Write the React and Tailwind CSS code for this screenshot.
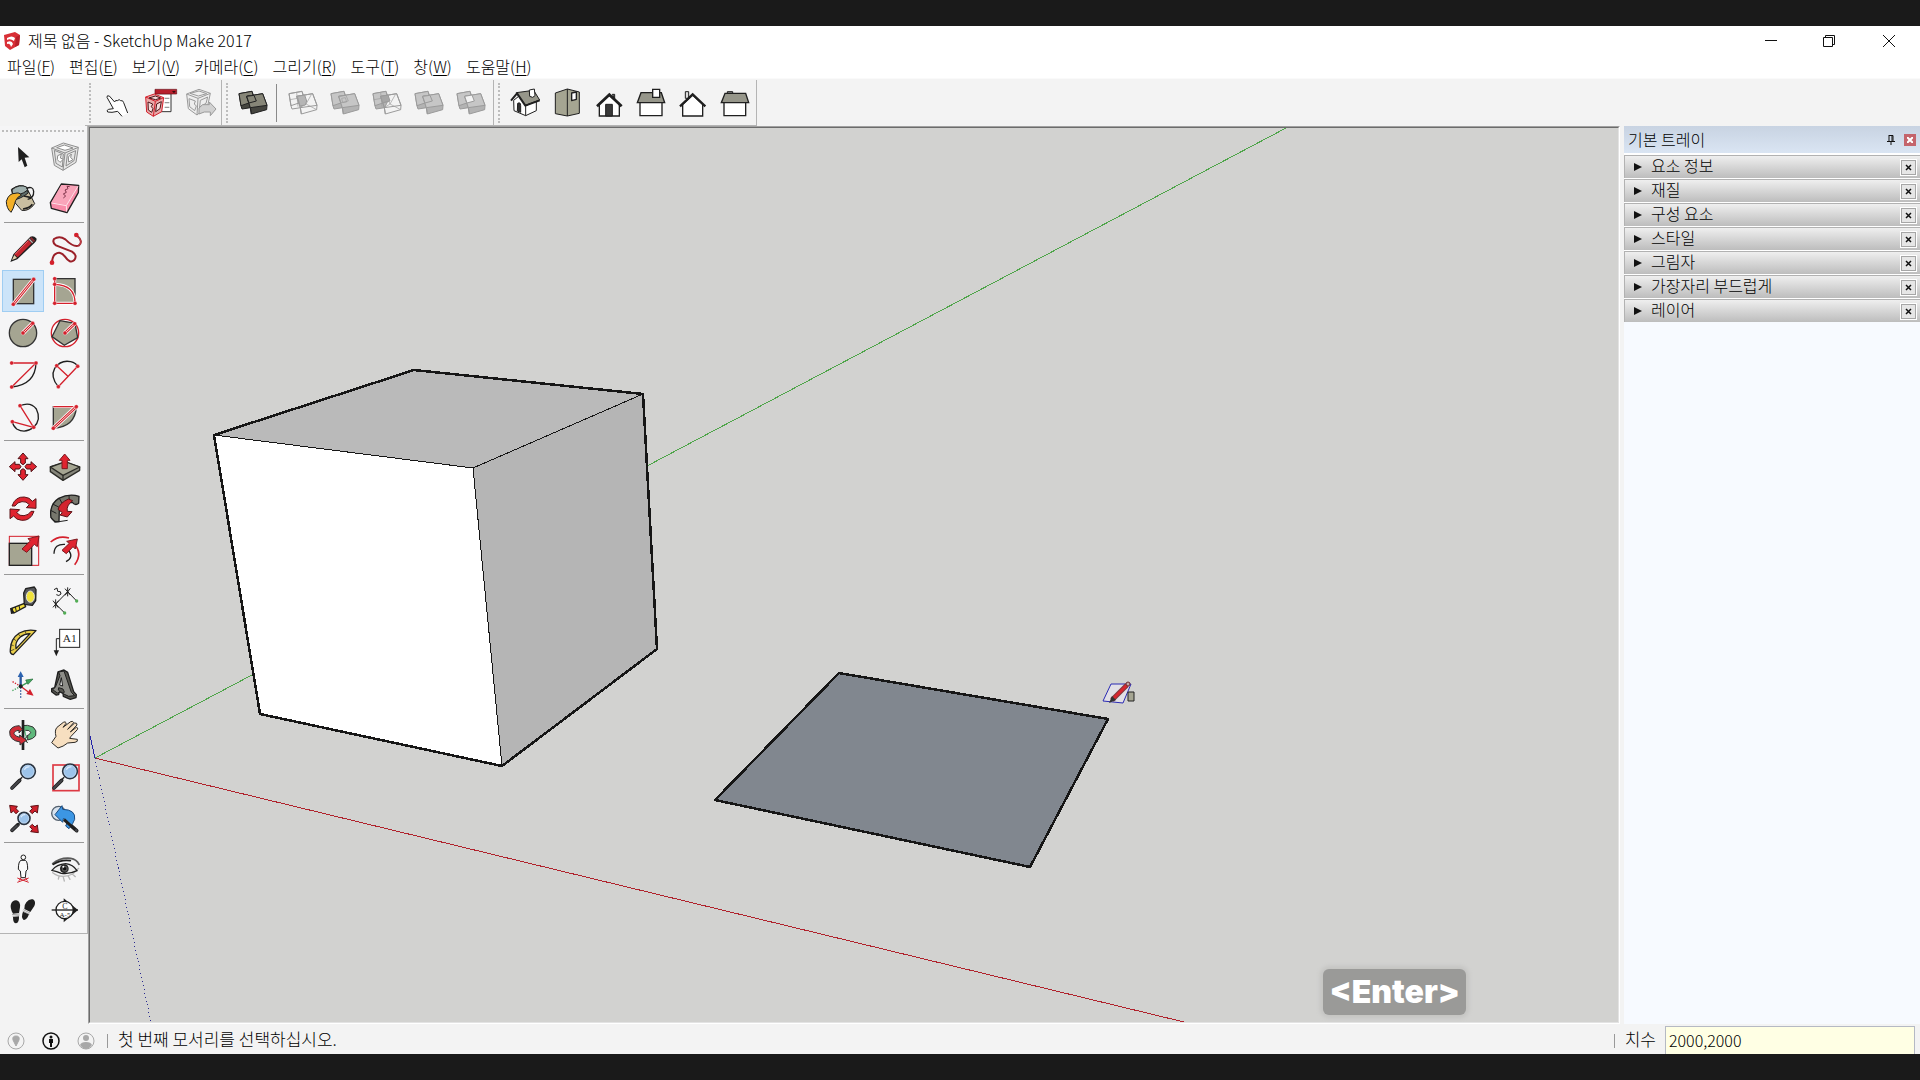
const RED = '#d4202c';
const INK = '#1f1f1f';
const CLAY = '#a5a592';

const MENUS = [
  ['파일', 'F'],
  ['편집', 'E'],
  ['보기', 'V'],
  ['카메라', 'C'],
  ['그리기', 'R'],
  ['도구', 'T'],
  ['창', 'W'],
  ['도움말', 'H'],
];

const TRAY_PANELS = ['요소 정보', '재질', '구성 요소', '스타일', '그림자', '가장자리 부드럽게', '레이어'];

// red guide line with white halo and a handle at each end
const Guide = ({ from, to }) => (
  <g>
    <path d={`M${from}L${to}`} stroke="#fff" strokeWidth="13" />
    <path d={`M${from}L${to}`} stroke={RED} strokeWidth="8" />
    <path d={`M${from}L${to}`} stroke="#f7dcd8" strokeWidth="3" />
    <Dots at={[from, to]} />
  </g>
);

const Dots = ({ at }) => at.map(p => {
  const [x, y] = p.split(' ');
  return <circle key={p} cx={x} cy={y} r="6" fill={RED} stroke="#fff" strokeWidth="1" />;
});

const Glass = ({ x, y, r = 22 }) => (
  <g>
    <path d={`M${x - r * 0.8} ${y + r * 0.8}L${x - r * 1.15} ${y + r * 1.15}`} stroke={INK} strokeWidth="4" />
    <circle cx={x} cy={y} r={r} fill="#9cc3ea" stroke="#2b3440" strokeWidth="5" />
    <circle cx={x} cy={y} r={r - 4} fill="none" stroke="#c4d9ef" strokeWidth="2" />
    <path d={`M${x - r * 0.5} ${y - r * 0.2}Q${x - r * 0.3} ${y - r * 0.7} ${x + r * 0.2} ${y - r * 0.6}`} fill="none" stroke="#dceafa" strokeWidth="4" />
  </g>
);

const Handle = ({ d }) => (
  <g strokeLinecap="round">
    <path d={d} stroke={INK} strokeWidth="11" />
    <path d={d} stroke="#47474c" strokeWidth="6" />
  </g>
);

const TOOLS = [
  [
    {
      name: '선택', box: '6 33 126 126',
      art: <path d="M54 66L88 97L74 98L82 122L74 127L65 103L56 111Z" fill={INK} />,
    },
    {
      name: '구성 요소 만들기', box: '132 33 126 126',
      art: (
        <g fill="#e6e6e6" stroke="#8d8d8d" strokeWidth="3" strokeLinejoin="round">
          <path d="M155 69L190 54L235 67L228 112L189 136L163 121Z" />
          <path d="M155 69L195 84L235 67M195 84L189 136M163 76L190 87L187 126L168 115ZM202 88L227 77L222 107L198 123Z" />
          <path d="M170 68L193 60L219 69L195 76ZM173 92L184 87L181 99L190 103L180 112L172 104ZM205 96L214 87L212 98L219 104L206 111Z" fill="#fff" />
        </g>
      ),
    },
    {
      name: '페인트 통', box: '6 159 126 126',
      art: (
        <g stroke={INK} strokeWidth="3" strokeLinejoin="round">
          <path d="M34 193Q62 173 80 188L104 236Q87 260 65 256L44 232Z" fill="#c9bea0" />
          <path d="M36 194Q58 176 80 186Q88 200 69 210Q50 220 38 209Z" fill="#9fb0ae" />
          <path d="M38 205Q58 215 82 196L85 204Q60 222 44 224Z" fill="#5e6c69" />
          <path d="M79 190Q99 182 101 199Q102 220 83 223" fill="none" strokeWidth="4" />
          <path d="M19 229Q26 205 45 205Q59 201 64 211Q48 217 44 236Q41 250 33 262Q19 250 19 229Z" fill="#f3b028" />
          <path d="M72 213L94 218M69 252Q88 250 97 238" fill="none" strokeWidth="5" />
        </g>
      ),
    },
    {
      name: '지우개', box: '132 159 126 126',
      art: (
        <g stroke={INK} strokeWidth="4" strokeLinejoin="round">
          <path d="M184 177L236 181L235 203L201 263L154 250L151 233Z" fill="#f88da9" />
          <path d="M184 180L233 184L200 240L155 232Z" fill="#f9a5ba" stroke="none" />
          <path d="M155 234L199 242L234 184M199 242L200 260" fill="none" stroke="#fde4e9" strokeWidth="3" />
          <path d="M190 219L197 213L190 207L199 202L195 195L204 191L201 184L209 185" fill="none" stroke="#7d3248" strokeWidth="3" />
        </g>
      ),
    },
  ],
  [
    {
      name: '선', box: '6 309 126 126',
      art: (
        <g strokeLinejoin="round">
          <path d="M31 411L40 388L91 335Q101 331 109 340Q112 347 104 353L52 403Z" fill={INK} />
          <path d="M36 405L43 390L51 399Z" fill="#e6d3b0" />
          <path d="M43 388L84 345L95 355L53 397Z" fill="#c2242d" />
          <path d="M45 388L85 347" stroke="#e8636a" strokeWidth="3" />
          <path d="M87 342L98 353" stroke="#c7b1b1" strokeWidth="4" />
          <path d="M92 338L103 349" stroke="#8c2a31" strokeWidth="6" />
        </g>
      ),
    },
    {
      name: '자유형', box: '132 309 126 126',
      art: (
        <g fill="none">
          <path d="M229 330Q252 350 236 362Q221 368 196 343Q178 331 162 342Q156 353 168 361L216 380Q234 392 222 406Q210 417 195 395Q181 376 165 388Q157 395 156 413" stroke="#9b2029" strokeWidth="6" />
          <path d="M229 330Q252 350 236 362" stroke="#d95058" strokeWidth="2" />
          <circle cx="229" cy="330" r="7" fill={RED} />
          <circle cx="156" cy="413" r="7" fill={RED} />
        </g>
      ),
    },
    {
      name: '직사각형', box: '6 435 126 126', active: true,
      art: (
        <g>
          <rect x="40" y="463" width="61" height="73" fill={CLAY} stroke="#333" strokeWidth="4" />
          <Guide from="40 538" to="101 463" />
        </g>
      ),
    },
    {
      name: '회전된 직사각형', box: '132 435 126 126',
      art: (
        <g fill="none">
          <path d="M164 461H225V535H164Z" fill={CLAY} stroke="#333" strokeWidth="4" />
          <path d="M164 461V535H225Q226 480 164 478" stroke="#fff" strokeWidth="9" />
          <path d="M164 461V535H225Q226 480 164 478" stroke={RED} strokeWidth="4" />
          <Dots at={['164 461', '164 478', '164 535', '225 535']} />
        </g>
      ),
    },
    {
      name: '원', box: '6 561 126 126',
      art: (
        <g>
          <circle cx="69" cy="624" r="41" fill={CLAY} stroke="#333" strokeWidth="4" />
          <Guide from="69 624" to="98 595" />
        </g>
      ),
    },
    {
      name: '다각형', box: '132 561 126 126',
      art: (
        <g>
          <circle cx="195" cy="624" r="41" fill="#fff" stroke={RED} strokeWidth="4" />
          <path d="M180 587L225 595L233 638L193 661L156 635Z" fill={CLAY} stroke="#333" strokeWidth="4" />
          <Guide from="195 624" to="224 596" />
        </g>
      ),
    },
    {
      name: '호', box: '6 687 126 126',
      art: (
        <g fill="none">
          <path d="M108 714Q106 779 35 786" stroke={INK} strokeWidth="4" />
          <path d="M35 714H108L35 786" stroke={RED} strokeWidth="4" />
          <Dots at={['35 714', '108 714', '35 786']} />
        </g>
      ),
    },
    {
      name: '2점 호', box: '132 687 126 126',
      art: (
        <g fill="none">
          <path d="M175 785Q150 756 164 730Q182 704 212 710Q228 714 233 724" stroke={INK} strokeWidth="4" />
          <path d="M175 785L233 724M170 722L203 753" stroke={RED} strokeWidth="4" />
          <Dots at={['175 785', '233 724', '170 722']} />
        </g>
      ),
    },
    {
      name: '3점 호', box: '6 813 126 126',
      art: (
        <g fill="none">
          <path d="M60 842Q92 829 109 852Q125 884 101 907Q76 927 50 912Q39 903 37 890" stroke={INK} strokeWidth="4" />
          <path d="M60 842L101 907L37 890" stroke={RED} strokeWidth="4" />
          <Dots at={['60 842', '101 907', '37 890']} />
        </g>
      ),
    },
    {
      name: '파이', box: '132 813 126 126',
      art: (
        <g fill="none">
          <path d="M160 845H229Q226 905 160 910Z" fill={CLAY} stroke="#333" strokeWidth="4" />
          <path d="M160 845H229" stroke="#fff" strokeWidth="8" />
          <path d="M160 845H229" stroke={RED} strokeWidth="4" />
          <Guide from="160 910" to="229 845" />
        </g>
      ),
    },
  ],
  [
    {
      name: '이동', box: '6 33 126 126',
      art: (
        <g fill="#e02430" stroke="#4d1216" strokeWidth="3" strokeLinejoin="round">
          {[0, 90, 180, 270].map(a => (
            <path key={a} transform={`rotate(${a} 69 95)`} d="M69 54L84 71H76V84L69 89L62 84V71H54Z" />
          ))}
        </g>
      ),
    },
    {
      name: '밀기/끌기', box: '132 33 126 126',
      art: (
        <g stroke="#2b2b26" strokeWidth="4" strokeLinejoin="round">
          <path d="M151 96L196 82L239 96V106L189 136L151 110Z" fill="#85857a" />
          <path d="M151 96L196 80L239 96L189 121Z" fill={CLAY} />
          <path d="M189 121V136" />
          <path d="M194 57L210 76H202V101H186V76H178Z" fill="#e02430" stroke="#7b1a20" strokeWidth="3" />
        </g>
      ),
    },
    {
      name: '회전', box: '6 159 126 126',
      art: (
        <g fill="#e02430" stroke="#5c1418" strokeWidth="3" strokeLinejoin="round">
          <path d="M36 213Q46 184 73 186Q89 187 97 199L108 191V220L79 218L88 209Q79 198 66 200Q52 201 45 213Z" />
          <path transform="rotate(180 69 221)" d="M36 213Q46 184 73 186Q89 187 97 199L108 191V220L79 218L88 209Q79 198 66 200Q52 201 45 213Z" />
        </g>
      ),
    },
    {
      name: '따라가기', box: '132 159 126 126',
      art: (
        <g stroke={INK} strokeWidth="4" strokeLinejoin="round">
          <path d="M153 248Q147 209 176 190Q208 174 237 184L236 205Q226 213 217 202Q188 203 178 224L177 260L165 261Z" fill="#77776d" />
          <path d="M152 226L169 235M158 207L176 216M178 190L187 206M207 181L208 200" strokeWidth="3" />
          <path d="M153 248Q160 262 177 260L203 256" fill="none" strokeWidth="3" />
          <path d="M174 223Q179 204 205 192L218 197Q198 212 202 229L216 230L202 246L180 240L187 233Q180 228 174 223Z" fill="#d3242f" stroke="#5c1418" strokeWidth="3" />
        </g>
      ),
    },
    {
      name: '배율', box: '6 285 126 126',
      art: (
        <g>
          <rect x="28" y="304" width="88" height="87" fill="none" stroke={RED} strokeWidth="3" />
          <rect x="28" y="325" width="67" height="66" fill={CLAY} stroke="#222" strokeWidth="4" />
          <path d="M117 303L112 335L103 328L80 352L66 342L91 318L84 311Z" fill="#e02430" stroke="#7b1a20" strokeWidth="3" />
        </g>
      ),
    },
    {
      name: '간격띄우기', box: '132 285 126 126',
      art: (
        <g fill="none">
          <path d="M152 321Q175 300 207 309M221 325Q250 355 224 389" stroke={RED} strokeWidth="5" />
          <path d="M162 356Q163 326 195 328M205 345Q223 367 198 380" stroke={INK} strokeWidth="4" />
          <path d="M232 312L226 342L219 335L199 356L186 346L208 325L200 319Z" fill="#e02430" stroke="#7b1a20" strokeWidth="3" />
        </g>
      ),
    },
  ],
  [
    {
      name: '줄자', box: '6 435 126 126',
      art: (
        <g stroke={INK} strokeWidth="4" strokeLinejoin="round">
          <path d="M33 521L73 505L77 515L42 534Z" fill="#f2dd3c" />
          <path d="M34 519L37 536" strokeWidth="8" />
          <path d="M46 516L49 529M57 512L60 525" strokeWidth="3" />
          <path d="M77 461L103 456L108 464L107 497L97 511L73 508L71 474Z" fill="#57585b" />
          <ellipse cx="91" cy="485" rx="12" ry="17" fill="#f1e23a" stroke="#e4e4d8" strokeWidth="3" />
        </g>
      ),
    },
    {
      name: '치수', box: '132 435 126 126',
      art: (
        <g stroke={INK} strokeWidth="3" fill="none">
          <path d="M167 507L203 470M167 507L194 534M203 470L230 498" />
          <path d="M159 497L175 518M176 497L159 517M167 493V520M195 461L211 480M211 460L195 481M203 457V484" />
          <path d="M162 464L171 459L173 469Q184 467 183 477Q177 485 169 479" />
          <circle cx="194" cy="534" r="5" fill="#52ad55" stroke="none" />
          <circle cx="230" cy="498" r="5" fill="#52ad55" stroke="none" />
        </g>
      ),
    },
    {
      name: '각도기', box: '6 561 126 126',
      art: (
        <g stroke={INK} strokeWidth="4" strokeLinejoin="round">
          <path d="M108 587L40 659Q29 657 31 643Q32 611 58 594Q80 582 108 587Z" fill="#e9ce4b" />
          <path d="M90 596L48 641Q44 621 61 606Q72 597 90 596Z" fill="#f6f6f6" />
          <path d="M32 629L41 632M40 611L48 617M55 597L61 604M75 588L78 596M33 647L43 643" strokeWidth="2" />
        </g>
      ),
    },
    {
      name: '문자', box: '132 561 126 126',
      art: (
        <g>
          <path d="M179 611H169V650" fill="none" stroke={INK} strokeWidth="3" />
          <path d="M161 646H177L169 664Z" fill={INK} />
          <rect x="179" y="583" width="60" height="54" fill="#fff" stroke={INK} strokeWidth="3" />
          <text x="209" y="620" textAnchor="middle" fontSize="34" fontFamily="Liberation Serif, serif" fill={INK}>A1</text>
        </g>
      ),
    },
    {
      name: '축', box: '6 687 126 126',
      art: (
        <g fill="none" strokeWidth="4">
          <path d="M62 754V722" stroke="#2b579a" strokeWidth="7" />
          <path d="M62 709L71 726H53Z" fill="#2b62b0" />
          <path d="M62 754L82 743" stroke="#3b9a55" />
          <path d="M99 732L84 748L77 735Z" fill="#43a55d" stroke="#1f6a35" strokeWidth="2" />
          <path d="M62 754L84 770" stroke={RED} />
          <path d="M101 782L79 777L90 762Z" fill={RED} />
          <path d="M62 757V788" stroke="#2b579a" strokeDasharray="4 5" />
          <path d="M62 754L34 738" stroke={RED} strokeDasharray="4 4" />
          <path d="M62 754L35 768" stroke="#43a55d" strokeDasharray="4 4" />
          <circle cx="62" cy="754" r="6" fill={INK} />
        </g>
      ),
    },
    {
      name: '3D 문자', box: '132 687 126 126',
      art: (
        <g stroke={INK} strokeWidth="4" strokeLinejoin="round">
          <path d="M174 711L192 705L203 712L221 770L229 779L228 788L211 793L190 784L189 775L178 770L176 779L168 780L155 770V761L164 758Z" fill="#55554f" />
          <path d="M176 711L192 708L214 772L224 782L206 784L189 776L193 771L189 762L176 758L175 765L180 770L172 774L158 764L166 757L180 722Z" fill="#8d8d88" strokeWidth="3" />
          <path d="M184 728L188 753L179 750Z" fill="#f3f3f3" strokeWidth="3" />
        </g>
      ),
    },
  ],
  [
    {
      name: '궤도', box: '6 72 126 126',
      art: (
        <g stroke="#333" strokeWidth="3" strokeLinejoin="round">
          <path d="M66 107Q82 103 99 111Q112 121 107 137Q100 147 83 150V139L73 147L83 159" fill="#5fb87c" />
          <path d="M76 121Q89 119 92 127Q90 135 79 138" fill="#f4f4f4" />
          <path d="M69 90V180" stroke={INK} strokeWidth="8" />
          <path d="M29 124Q34 108 58 107L67 118L57 129V121Q43 122 42 131Q45 139 59 142V135L80 151L60 165V156Q27 151 29 124Z" fill="#cf2d37" />
        </g>
      ),
    },
    {
      name: '이동 보기', box: '132 72 126 126',
      art: (
        <path d="M155 158L168 139Q163 121 171 112L190 97Q196 93 199 99L189 112L212 95Q219 92 221 98L203 118L224 99Q232 98 231 105L211 126L229 112Q236 113 232 119L213 139L209 145L232 148Q235 155 225 157L203 159Q190 170 174 174Z" fill="#f7dfc0" stroke="#2d2a26" strokeWidth="3" strokeLinejoin="round" />
      ),
    },
    {
      name: '확대/축소', box: '6 198 126 126',
      art: <g><Handle d="M36 294L59 271" /><Glass x={84} y={244} /></g>,
    },
    {
      name: '확대/축소 창', box: '132 198 126 126',
      art: (
        <g>
          <rect x="159" y="225" width="78" height="77" fill="none" stroke="#dd3a44" strokeWidth="5" />
          <Handle d="M162 294L185 271" /><Glass x={210} y={244} />
        </g>
      ),
    },
    {
      name: '범위 확대/축소', box: '6 324 126 126',
      art: (
        <g>
          <g fill="#cf202b" stroke="#5c1418" strokeWidth="3" strokeLinejoin="round">
            <path d="M29 346L52 349L48 356L56 364L48 371L40 363L33 369Z" />
            <path d="M115 346L92 349L97 356L89 364L97 371L105 363L112 369Z" />
            <path d="M115 428L92 425L97 418L89 410L97 403L105 411L112 405Z" />
          </g>
          <Handle d="M36 421L54 404" /><Glass x={72} y={385} r={18} />
        </g>
      ),
    },
    {
      name: '이전', box: '132 324 126 126',
      art: (
        <g>
          <circle cx="176" cy="370" r="21" fill="#d7e2ee" stroke="#53606e" strokeWidth="4" />
          <Handle d="M204 399L230 422" />
          <path d="M165 374L186 347L188 358Q228 359 224 388Q220 400 207 416L197 408Q209 389 190 386L188 397Z" fill="#3c96e4" stroke="#1c4c80" strokeWidth="3" strokeLinejoin="round" />
          <path d="M192 389L226 419" stroke={INK} strokeWidth="9" />
        </g>
      ),
    },
  ],
  [
    {
      name: '카메라 배치', box: '6 474 126 126',
      art: (
        <g strokeLinejoin="round">
          <path d="M52 564L86 577M86 564L52 577" stroke={RED} strokeWidth="3" />
          <path d="M63 511Q55 514 55 538L61 543L63 563H76L78 543L83 538Q83 514 76 511Z" fill="#fafafa" stroke={INK} strokeWidth="3" />
          <circle cx="70" cy="502" r="7" fill="#fafafa" stroke={INK} strokeWidth="3" />
          <path d="M63 563L57 572M76 563L82 572" stroke={RED} strokeWidth="3" />
        </g>
      ),
    },
    {
      name: '둘러보기', box: '132 474 126 126',
      art: (
        <g fill="none" strokeLinecap="round">
          <path d="M158 548Q185 568 218 552L236 535M190 562L193 573M205 559L210 568M218 553L226 560M177 560L175 567" stroke="#b5b5b5" strokeWidth="4" />
          <path d="M158 521Q180 502 212 505Q230 508 237 523" stroke="#5a5a5a" strokeWidth="5" />
          <path d="M160 523Q183 508 211 512" stroke={INK} strokeWidth="5" />
          <path d="M156 541Q170 523 197 521Q219 523 231 542Q210 553 184 550Q170 544 156 541Z" fill="#eee" stroke={INK} strokeWidth="4" />
          <circle cx="193" cy="536" r="13" fill={INK} />
          <circle cx="194" cy="536" r="9" fill="#555" />
          <circle cx="194" cy="536" r="5" fill="#111" />
          <circle cx="190" cy="530" r="3" fill="#fff" />
        </g>
      ),
    },
    {
      name: '워크', box: '6 600 126 126',
      art: (
        <g fill={INK}>
          <path d="M33 642Q38 630 49 631Q62 634 60 652L57 669L39 671Q29 654 33 642Z" />
          <path d="M39 681L57 679Q58 699 48 700Q39 700 39 681Z" />
          <path d="M36 674L59 672M38 679L58 677" stroke="#777" strokeWidth="2" />
          <path d="M79 637Q88 625 99 628Q109 635 103 648L91 666L73 657Q73 643 79 637Z" />
          <path d="M69 665L87 673Q80 691 71 690Q62 682 69 665Z" />
          <path d="M70 659L90 669M68 663L88 673" stroke="#777" strokeWidth="2" />
        </g>
      ),
    },
    {
      name: '단면', box: '132 600 126 126',
      art: (
        <g>
          <path d="M191 625L234 660L191 697Z" fill={INK} />
          <circle cx="194" cy="660" r="26" fill="#fff" stroke={INK} strokeWidth="4" />
          <path d="M155 660H234" stroke={INK} strokeWidth="4" />
          <text x="195" y="656" textAnchor="middle" fontSize="24" fontFamily="Liberation Serif, serif" fill={INK}>C</text>
          <text x="195" y="680" textAnchor="middle" fontSize="21" fontFamily="Liberation Serif, serif" fill={INK}>A-5</text>
        </g>
      ),
    },
  ],
];

// two overlapping solids; each operation fills different parts of them
const Solids = ({ mode }) => {
  const dark = mode === 'outer';
  const line = dark ? '#222' : '#9b9b9b';
  const top = dark ? '#878678' : '#c6c6c6';
  const side = dark ? '#45453f' : '#b3b3b3';
  const back = mode !== 'intersect';
  const front = mode !== 'intersect' && mode !== 'subtract';
  return (
    <g stroke={line} strokeWidth="3" strokeLinejoin="round">
      <path d="M21 35L60 28L68 52L56 77L30 81L27 72Z" fill={back ? side : 'none'} />
      <path d="M21 35L60 28L68 57L27 71Z" fill={back ? top : 'none'} />
      <path d="M44 43L92 35L105 70L104 83L58 96L55 77Z" fill={front ? side : 'none'} />
      <path d="M44 43L92 35L105 70L55 77Z" fill={front ? top : 'none'} />
      <path d="M55 77L58 96" />
      {!front && <path d="M60 39L72 66L104 83M72 66L55 77M24 53L64 46M44 32L48 74M72 66L88 38" fill="none" strokeWidth="2" />}
      {mode === 'intersect' && <path d="M46 43L68 39L74 57L70 69L54 72Z" fill="#b5b5b5" />}
      {mode === 'subtract' && <path d="M44 43L66 39L72 57L50 62Z" fill="#a6a6a6" />}
      {mode === 'union' && <path d="M44 43L66 40L73 57L51 62ZM53 49L64 47L68 60L56 62Z" fill="none" strokeWidth="2" />}
      {mode === 'split' && <path d="M44 43L66 39L73 57L51 63Z" fill="#f2f2f2" />}
      {(dark || mode === 'trim') && <path d="M44 43L66 40L73 57L51 63Z" fill={top} />}
    </g>
  );
};

const WAREHOUSE_TOOLS = [
  {
    name: '이동 손', box: '0 0 126 126',
    art: <path d="M81 103L68 88Q49 93 38 90Q33 85 41 82L55 80L36 46Q35 39 43 42L59 60Q61 53 67 56Q73 50 77 56Q84 54 86 62L98 93" fill="#fff" stroke="#222" strokeWidth="3" strokeLinejoin="round" />,
  },
  {
    name: '3D Warehouse', box: '-6 0 126 126',
    art: (
      <g strokeLinejoin="round">
        <path d="M52 35H96V89H60" fill="#fff" stroke="#333" strokeWidth="3" />
        <path d="M48 22H113V36H48Z" fill="#b81f2c" stroke="#661119" strokeWidth="2" />
        <path d="M99 27H110L105 34Z" fill="#3d0a0f" />
        <path d="M77 49H91M77 62H91M77 76H91" stroke="#999" strokeWidth="4" />
        <path d="M20 45L46 36L74 47L68 89L43 103L23 90Z" fill="#e9a9a9" stroke={RED} strokeWidth="3" />
        <path d="M20 45L49 58L74 47M49 58L43 103" fill="none" stroke={RED} strokeWidth="3" />
        <path d="M30 48L49 42L65 48L50 53ZM27 60L41 66L37 74L42 80L38 91L28 84ZM53 66L67 59L63 80L50 89Z" fill="#f6dcdc" stroke="#4d1518" strokeWidth="3" />
      </g>
    ),
  },
  {
    name: '구성 요소 공유', box: '-6 0 126 126',
    art: (
      <g fill="#eee" stroke="#9a9a9a" strokeWidth="3" strokeLinejoin="round">
        <path d="M17 36L54 22L88 34L80 72L48 99L22 80Z" />
        <path d="M17 36L51 49L88 34M51 49L48 99M27 34L54 27L77 35L52 42ZM24 50L43 57L40 66L46 72L41 86L26 74ZM58 55L80 45L75 64L56 75Z" />
        <path d="M54 78L65 68H85V60L105 81L88 101V90H70L54 96Z" fill="#d1d1d1" />
      </g>
    ),
  },
];

const OUTER_SHELL = [{ name: '외부 쉘', box: '0 0 126 126', art: <Solids mode="outer" /> }];

const SOLID_TOOLS = [
  { name: '교차', box: '0 0 126 126', art: <Solids mode="intersect" /> },
  { name: '결합', box: '0 0 126 126', art: <Solids mode="union" /> },
  { name: '빼기', box: '0 0 126 126', art: <Solids mode="subtract" /> },
  { name: '자르기', box: '0 0 126 126', art: <Solids mode="trim" /> },
  { name: '분할', box: '0 0 126 126', art: <Solids mode="split" /> },
];

const VIEW_TOOLS = [
  {
    name: '등각투영', box: '72 21 126 126',
    art: (
      <g stroke={INK} strokeWidth="3" strokeLinejoin="round">
        <path d="M101 76L116 64L138 92L169 78V107L137 122L102 107Z" fill="#fff" />
        <path d="M113 85Q122 80 122 92V112L112 108Z" fill="#333" />
        <path d="M109 53L161 46L179 75L136 91Z" fill="#96968a" />
        <path d="M93 77L111 55L136 92L179 76" fill="none" strokeWidth="6" />
        <path d="M148 45L163 42L165 62L158 67L149 64Z" fill="#fff" />
        <path d="M137 92V122" />
      </g>
    ),
  },
  {
    name: '맨 위', box: '198 21 126 126',
    art: (
      <g stroke={INK} strokeWidth="3" strokeLinejoin="round">
        <path d="M226 54L262 42L298 51V115L262 123L226 116Z" fill={CLAY} />
        <path d="M262 42V123" />
        <path d="M275 54L289 51V73L275 77Z" fill="#fff" strokeWidth="4" />
      </g>
    ),
  },
  {
    name: '앞', box: '324 21 126 126',
    art: (
      <g stroke={INK} strokeLinejoin="miter">
        <path d="M397 58H404V72Z" fill="#777" strokeWidth="3" />
        <path d="M358 86L388 61L418 86V123H358Z" fill="#fff" strokeWidth="4" />
        <path d="M351 94L388 59L425 94" fill="none" strokeWidth="8" />
        <path d="M377 88H397V123H377Z" fill="#3a3a3a" strokeWidth="3" />
      </g>
    ),
  },
  {
    name: '오른쪽', box: '450 21 126 126',
    art: (
      <g stroke={INK} strokeWidth="4">
        <path d="M480 82H546V122H480Z" fill="#fff" />
        <path d="M483 53H544L554 83H472Z" fill="#96968a" />
        <path d="M518 43H539V67H518Z" fill="#fff" />
      </g>
    ),
  },
  {
    name: '뒤', box: '576 21 126 126',
    art: (
      <g stroke={INK}>
        <path d="M616 50H626V70H616Z" fill="#ddd" strokeWidth="3" />
        <path d="M608 88L638 60L668 88V123H608Z" fill="#fff" strokeWidth="4" />
        <path d="M600 94L638 58L676 94" fill="none" strokeWidth="7" />
      </g>
    ),
  },
  {
    name: '왼쪽', box: '702 21 126 126',
    art: (
      <g stroke={INK} strokeWidth="4">
        <path d="M742 50H758V55H742Z" fill="#aaa" strokeWidth="3" />
        <path d="M732 82H797V122H732Z" fill="#fff" />
        <path d="M735 55H797L806 83H724Z" fill="#96968a" />
      </g>
    ),
  },
];

const ToolButton = ({ tool }) => (
  <button
    type="button"
    aria-label={tool.name}
    className={`h-[42px] w-[42px] shrink-0 ${tool.active ? 'bg-[#cce4f9] outline outline-1 -outline-offset-1 outline-[#9fcdf2]' : ''}`}
  >
    <svg viewBox={tool.box} className="block h-full w-full">{tool.art}</svg>
  </button>
);

const ToolGroup = ({ children }) => (
  <div className="flex h-[46px] items-center border-r border-b border-[#b4b4b4] pl-1">
    <div className="mr-1 h-10 border-l-2 border-dotted border-[#bdbdbd]" />
    {children}
  </div>
);

const TitleBar = () => (
  <div className="flex h-[30px] items-center justify-between bg-white pl-1">
    <div className="flex items-center gap-2">
      <svg viewBox="0 0 16 18" className="h-[18px] w-4">
        <path d="M0 3L11 0L16 3L15 13L6 18L1 14Z" fill="#d92f36" />
        <path d="M3 6Q8 3 11 6L10 9Q6 6 3 8ZM3 10Q8 8 9 12L7 15Q6 11 3 12Z" fill="#fff" />
        <path d="M12 5L16 3L15 13L11 15Z" fill="#b81f29" />
      </svg>
      <h1 className="pb-0.5 font-light">제목 없음 - SketchUp Make 2017</h1>
    </div>
    <div className="flex pr-px">
      <button type="button" aria-label="최소화" className="flex h-7 w-[57px] items-center justify-center">
        <svg viewBox="0 0 12 12" className="h-3 w-3"><path d="M0 5.5H12" stroke="#111" /></svg>
      </button>
      <button type="button" aria-label="이전 크기로" className="flex h-7 w-[59px] items-center justify-center">
        <svg viewBox="0 0 12 12" className="h-3 w-3" fill="none" stroke="#111"><path d="M.5 2.5H9.5V11.5H.5ZM2.5 2.5V.5H11.5V9.5H9.5" /></svg>
      </button>
      <button type="button" aria-label="닫기" className="flex h-7 w-[61px] items-center justify-center">
        <svg viewBox="0 0 12 12" className="h-3 w-3"><path d="M0 0L12 12M12 0L0 12" stroke="#111" /></svg>
      </button>
    </div>
  </div>
);

const MenuBar = () => (
  <nav className="flex h-[22px] items-center gap-[14px] bg-white pb-0.5 pl-[7px]">
    {MENUS.map(([label, key]) => (
      <button key={key} type="button" className="leading-5">
        {label}(<span className="underline underline-offset-2">{key}</span>)
      </button>
    ))}
  </nav>
);

const TopToolbar = () => (
  <div className="flex h-12 border-t border-[#fafafa] pt-px pl-[85px]">
    <ToolGroup>
      {WAREHOUSE_TOOLS.map(t => <ToolButton key={t.name} tool={t} />)}
    </ToolGroup>
    <ToolGroup>
      {OUTER_SHELL.map(t => <ToolButton key={t.name} tool={t} />)}
      <div className="mr-[5px] ml-0.5 h-[38px] border-l border-[#8a8a8a]" />
      {SOLID_TOOLS.map(t => <ToolButton key={t.name} tool={t} />)}
      <div className="w-px" />
    </ToolGroup>
    <ToolGroup>
      {VIEW_TOOLS.map(t => <ToolButton key={t.name} tool={t} />)}
    </ToolGroup>
  </div>
);

const SideToolbar = () => (
  <aside className="w-[88px] shrink-0">
    <div className="border-r border-b border-[#b4b4b4] bg-[#f5f5f6] pt-1 pb-px pl-0.5">
      <div className="mb-1 w-[82px] border-t-2 border-dotted border-[#bdbdbd]" />
      {TOOLS.map((group, i) => (
        <div key={group[0].name}>
          {i > 0 && <div className="mt-0.5 mb-[5px] ml-0.5 w-20 border-t border-[#999]" />}
          <div className="grid w-[84px] grid-cols-2">
            {group.map(t => <ToolButton key={t.name} tool={t} />)}
          </div>
        </div>
      ))}
    </div>
  </aside>
);

const Viewport = () => (
  <main className="relative min-w-0 flex-1 overflow-hidden border-t border-r border-b border-l border-t-[#a0a0a0] border-r-white border-b-white border-l-[#a0a0a0]">
    <div className="h-full border border-t-[#6b6b6b] border-r-[#e3e3e3] border-b-[#e3e3e3] border-l-[#6b6b6b] bg-[#d2d2d0]">
      <svg viewBox="90 128 1528 894" preserveAspectRatio="xMinYMin slice" className="block h-full w-full" fill="none" strokeLinejoin="round">
        <g shapeRendering="crispEdges">
          <path d="M95 758L1286 128" stroke="#4fa54a" />
          <path d="M95 758L1184 1022" stroke="#b0222c" />
          <path d="M90 736L95 758" stroke="#2424a8" />
          <path d="M95 758L151 1022" stroke="#2a2a90" strokeDasharray="1 3" />
          <path d="M214 435L414 370L643 394L473 468Z" fill="#bababa" />
          <path d="M473 468L643 394L657 649L502 766Z" fill="#b5b5b5" />
          <path d="M214 435L473 468L502 766L260 714Z" fill="#fff" />
          <path d="M214 435L473 468L643 394M473 468L502 766" stroke="#161616" />
          <path d="M214 435L414 370L643 394L657 649L502 766L260 714Z" stroke="#161616" strokeWidth="2.5" />
          <path d="M839 673L1108 719L1030 867L715 800Z" fill="#81878f" stroke="#161616" strokeWidth="2.5" />
        </g>
        <path d="M1111 684H1131L1123 703L1103 701Z" fill="#e2e0e6" stroke="#2a2ab4" />
        <path d="M1112 700L1127 685" stroke="#7e3a3e" strokeWidth="5" />
        <path d="M1113 699L1127 685" stroke="#d8262f" strokeWidth="3" />
        <path d="M1109 703L1112 696L1116 700Z" fill="#333" />
        <circle cx="1128" cy="684" r="2" fill="#c9a4a6" stroke="#6b2a2e" />
        <path d="M1128 692H1134V701H1128Z" fill="#a5a592" stroke="#222" />
      </svg>
    </div>
    <div className="absolute right-[153px] bottom-2 rounded-md bg-[#9a9a98] px-1.5 font-[Inter,sans-serif] text-[32px] leading-[46px] font-black text-white shadow-[0_0_4px_3px_#c4c4c2]">
      &lt;Enter&gt;
    </div>
  </main>
);

const Tray = () => (
  <aside className="ml-1 w-[296px] shrink-0 bg-[#f7faff]">
    <div className="flex h-[27px] items-center justify-between bg-linear-to-b from-[#c8d3e2] to-[#dae5f3] pr-1 pl-1">
      <h2 className="pb-0.5 font-light">기본 트레이</h2>
      <div className="flex items-center gap-[9px]">
        <button type="button" aria-label="고정">
          <svg viewBox="0 0 8 10" className="h-[10px] w-2" fill="none" stroke="#111"><path d="M2 .5H6V6M5 .5V6M2 0V6M0 6.5H8M4 7V10" /></svg>
        </button>
        <button type="button" aria-label="트레이 닫기" className="flex h-3 w-3 items-center justify-center bg-[#c4646c]">
          <svg viewBox="0 0 6 6" className="h-1.5 w-1.5"><path d="M0 0L6 6M6 0L0 6" stroke="#fff" strokeWidth="2" /></svg>
        </button>
      </div>
    </div>
    <div className="flex flex-col gap-px bg-white pt-0.5">
      {TRAY_PANELS.map(name => (
        <div key={name} className="flex h-[23px] items-center justify-between border-t border-l border-[#b2b2b2] bg-linear-to-b from-[#efefef] to-[#bdbdbd] pr-[3px] pl-[9px]">
          <button type="button" className="flex items-center gap-[9px]">
            <svg viewBox="0 0 8 8" className="h-2 w-2"><path d="M0 0L8 4L0 8Z" fill="#111" /></svg>
            <span className="pb-1 leading-5 font-light">{name}</span>
          </button>
          <button type="button" aria-label={`${name} 닫기`} className="flex h-[17px] w-[17px] items-center justify-center border border-white bg-[#e6e6e6] outline outline-1 -outline-offset-2 outline-[#a6a6a6]">
            <svg viewBox="0 0 7 7" className="h-[7px] w-[7px]"><path d="M1 1L6 6M6 1L1 6" stroke="#111" strokeWidth="1.5" /></svg>
          </button>
        </div>
      ))}
    </div>
  </aside>
);

const StatusBar = () => (
  <footer className="flex h-[30px] items-center overflow-hidden pr-[5px] pl-[7px] text-[17px]">
    <div className="flex items-center gap-[17px] pt-1">
      <button type="button" aria-label="위치">
        <svg viewBox="0 0 18 18" className="block h-[18px] w-[18px]" fill="none" stroke="#a8a8a8">
          <circle cx="9" cy="9" r="8" />
          <path d="M9 14L6 8Q5 4 9 4Q13 4 12 8Z" fill="#a8a8a8" />
        </svg>
      </button>
      <button type="button" aria-label="크레딧">
        <svg viewBox="0 0 18 18" className="block h-[18px] w-[18px]" fill="none" stroke="#111">
          <circle cx="9" cy="9" r="8" strokeWidth="1.5" />
          <circle cx="9" cy="5" r="1.5" fill="#111" stroke="none" />
          <path d="M7 7H11V11H10V15H8V11H7Z" fill="#111" stroke="none" />
        </svg>
      </button>
      <button type="button" aria-label="로그인">
        <svg viewBox="0 0 18 18" className="block h-[18px] w-[18px]" fill="#a8a8a8">
          <circle cx="9" cy="9" r="8" fill="none" stroke="#a8a8a8" />
          <circle cx="9" cy="6" r="3" />
          <path d="M3 13Q4 10 9 10Q14 10 15 13Q12 17 9 17Q6 17 3 13Z" />
        </svg>
      </button>
    </div>
    <div className="mt-1 ml-[12px] h-[14px] border-l border-[#999]" />
    <p className="ml-[10px] flex-1 leading-6 font-light">첫 번째 모서리를 선택하십시오.</p>
    <div className="mt-1 h-[14px] border-l border-[#999]" />
    <label htmlFor="measure" className="ml-[10px] leading-6 font-light">치수</label>
    <input
      id="measure"
      defaultValue="2000,2000"
      className="mt-1 ml-[9px] h-[30px] w-[250px] border border-[#b5b9c4] bg-[#ffffe4] pb-0.5 pl-[3px] text-base font-light"
    />
  </footer>
);

const App = () => (
  <div className="flex h-screen flex-col bg-[#1a1a1a] py-[26px] font-['Noto_Sans_CJK_KR',sans-serif] text-base font-light text-black">
    <div className="flex min-h-0 flex-1 flex-col bg-[#f3f3f3]">
      <TitleBar />
      <MenuBar />
      <TopToolbar />
      <div className="flex min-h-0 flex-1">
        <SideToolbar />
        <Viewport />
        <Tray />
      </div>
      <StatusBar />
    </div>
  </div>
);

export default App;
